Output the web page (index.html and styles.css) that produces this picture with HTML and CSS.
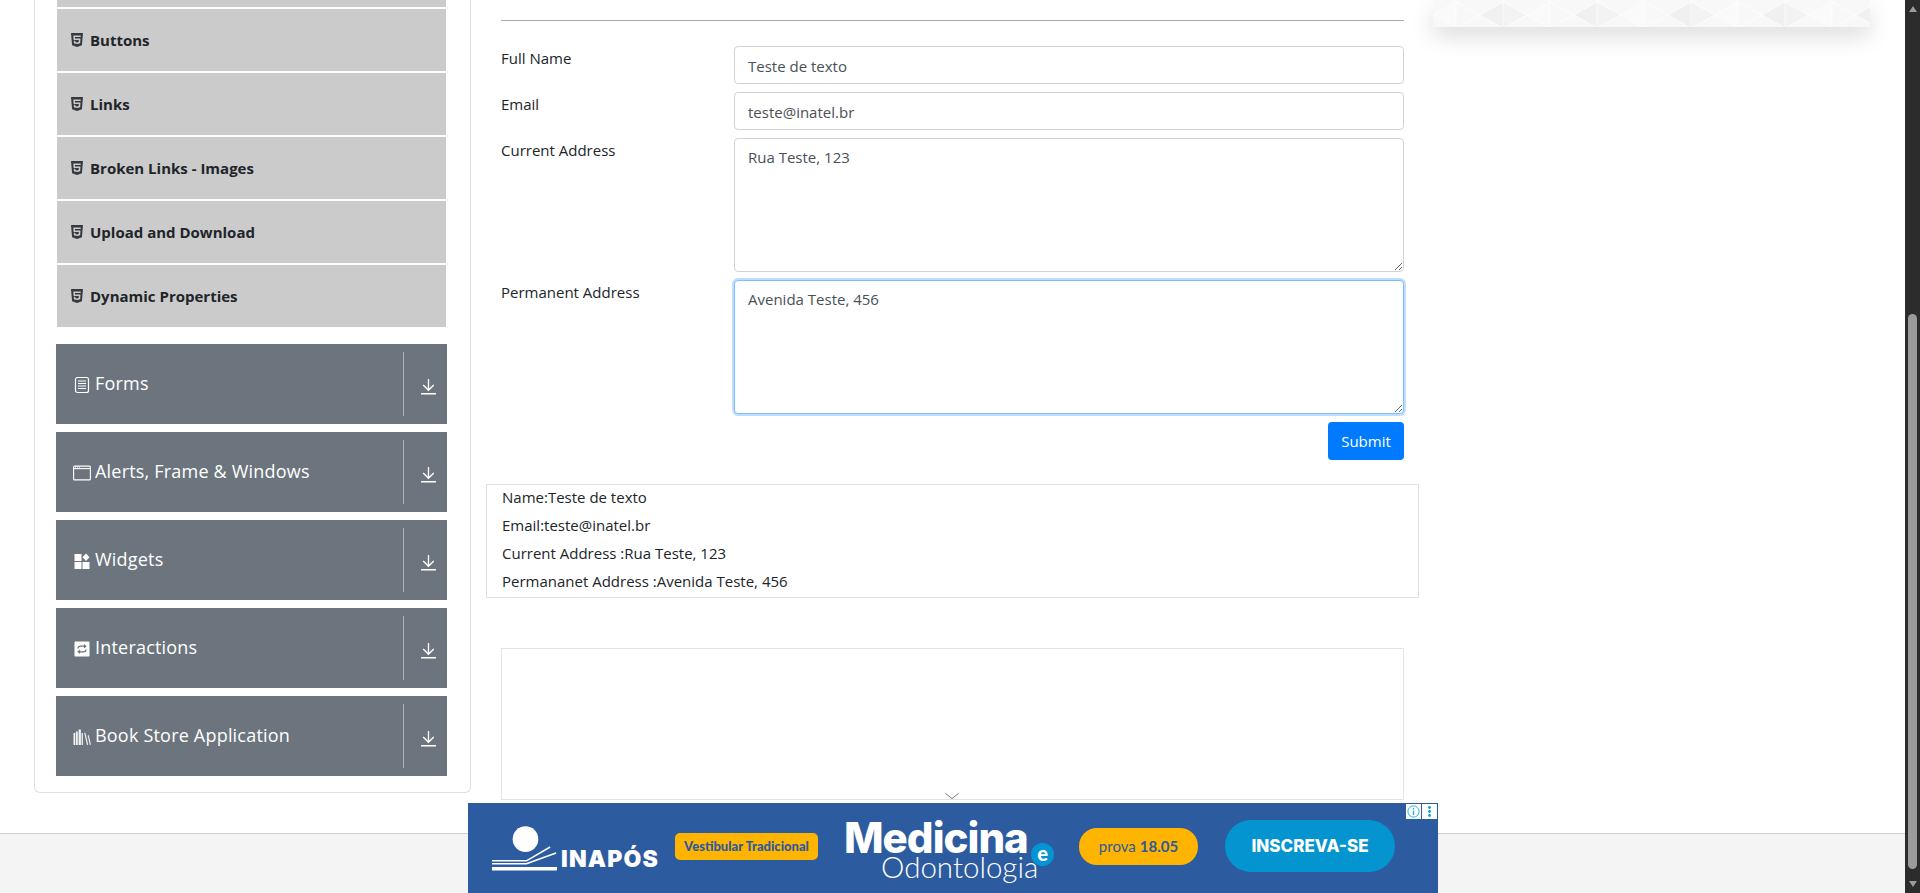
FILE: index.html
```html
<!DOCTYPE html>
<html lang="pt-BR">
<head>
  <meta charset="UTF-8">
  <title>Text Box</title>
  <link rel="stylesheet" href="styles.css">
</head>
<body>
<div class="page">
  <div class="main">
    <div class="layout">

      <!-- menu lateral -->
      <aside class="sidebar">
        <ul class="sub-list">
          <li class="sub-item stub"></li>
          <li class="sub-item"><svg class="html-icon" viewBox="0 0 384 512"><path d="M0 32l34.9 395.8L191.5 480l157.6-52.2L384 32H0zm308.2 127.9H124.4l4.1 49.4h175.6l-13.6 148.4-97.9 27v.3h-1.1l-98.7-27.3-6-75.8h47.7L138 320l53.5 14.5 53.7-14.5 6-62.2H84.3L71.5 112.2h241.1l-4.4 47.7z"/></svg>Buttons</li>
          <li class="sub-item"><svg class="html-icon" viewBox="0 0 384 512"><path d="M0 32l34.9 395.8L191.5 480l157.6-52.2L384 32H0zm308.2 127.9H124.4l4.1 49.4h175.6l-13.6 148.4-97.9 27v.3h-1.1l-98.7-27.3-6-75.8h47.7L138 320l53.5 14.5 53.7-14.5 6-62.2H84.3L71.5 112.2h241.1l-4.4 47.7z"/></svg>Links</li>
          <li class="sub-item"><svg class="html-icon" viewBox="0 0 384 512"><path d="M0 32l34.9 395.8L191.5 480l157.6-52.2L384 32H0zm308.2 127.9H124.4l4.1 49.4h175.6l-13.6 148.4-97.9 27v.3h-1.1l-98.7-27.3-6-75.8h47.7L138 320l53.5 14.5 53.7-14.5 6-62.2H84.3L71.5 112.2h241.1l-4.4 47.7z"/></svg>Broken Links - Images</li>
          <li class="sub-item"><svg class="html-icon" viewBox="0 0 384 512"><path d="M0 32l34.9 395.8L191.5 480l157.6-52.2L384 32H0zm308.2 127.9H124.4l4.1 49.4h175.6l-13.6 148.4-97.9 27v.3h-1.1l-98.7-27.3-6-75.8h47.7L138 320l53.5 14.5 53.7-14.5 6-62.2H84.3L71.5 112.2h241.1l-4.4 47.7z"/></svg>Upload and Download</li>
          <li class="sub-item"><svg class="html-icon" viewBox="0 0 384 512"><path d="M0 32l34.9 395.8L191.5 480l157.6-52.2L384 32H0zm308.2 127.9H124.4l4.1 49.4h175.6l-13.6 148.4-97.9 27v.3h-1.1l-98.7-27.3-6-75.8h47.7L138 320l53.5 14.5 53.7-14.5 6-62.2H84.3L71.5 112.2h241.1l-4.4 47.7z"/></svg>Dynamic Properties</li>
        </ul>

        <div class="group">
          <span class="group-icon">
            <svg viewBox="0 0 18 18"><rect x="2.5" y="1.5" width="13" height="15" rx="2" fill="none" stroke="#fff" stroke-width="1.2"/><path d="M5 5h8M5 7.5h8M5 10h8M5 12.5h8" stroke="#fff" stroke-width="1.1"/></svg>
          </span>
          <span class="group-name">Forms</span>
          <span class="group-arrow"><svg viewBox="0 0 16 16"><path d="M8 1v10M3 6.5l5 5 5-5M1 14.8h14" fill="none" stroke="#fff" stroke-width="1.3"/></svg></span>
        </div>
        <div class="group">
          <span class="group-icon">
            <svg viewBox="0 0 18 18"><rect x=".6" y="2.1" width="16.8" height="13.8" rx="1" fill="none" stroke="#fff" stroke-width="1.1"/><path d="M1 4.6h16" stroke="#fff" stroke-width="1.1"/><path d="M2 3h1M4 3h1M6 3h1" stroke="#fff"/></svg>
          </span>
          <span class="group-name">Alerts, Frame &amp; Windows</span>
          <span class="group-arrow"><svg viewBox="0 0 16 16"><path d="M8 1v10M3 6.5l5 5 5-5M1 14.8h14" fill="none" stroke="#fff" stroke-width="1.3"/></svg></span>
        </div>
        <div class="group">
          <span class="group-icon">
            <svg viewBox="0 0 18 18"><path d="M1.5 2h7v7h-7zM1.5 10h7v7h-7zM9.5 10h7v7h-7zM13 1.5l3.5 3.7L13 9l-3.5-3.8z" fill="#fff"/></svg>
          </span>
          <span class="group-name">Widgets</span>
          <span class="group-arrow"><svg viewBox="0 0 16 16"><path d="M8 1v10M3 6.5l5 5 5-5M1 14.8h14" fill="none" stroke="#fff" stroke-width="1.3"/></svg></span>
        </div>
        <div class="group">
          <span class="group-icon">
            <svg viewBox="0 0 18 18"><rect x="1.5" y="1.5" width="15" height="15" rx="1" fill="#fff"/><path d="M5 8.5c0-1.5 1-2.3 2.5-2.3h5M11 4.6l1.8 1.6L11 7.8M13 9.5c0 1.5-1 2.3-2.5 2.3h-5M7 10.2l-1.8 1.6L7 13.4" fill="none" stroke="#6c757d" stroke-width="1.2"/></svg>
          </span>
          <span class="group-name">Interactions</span>
          <span class="group-arrow"><svg viewBox="0 0 16 16"><path d="M8 1v10M3 6.5l5 5 5-5M1 14.8h14" fill="none" stroke="#fff" stroke-width="1.3"/></svg></span>
        </div>
        <div class="group">
          <span class="group-icon">
            <svg viewBox="0 0 18 18"><path d="M.5 5h1.6v12H.5zM2.8 3.5h2v13.5h-2zM5.6 1.5h2.3V17H5.6zM8.6 5h1.3v12H8.6zM11.2 5l1.2-.3 2.8 12-1.2.3zM14.6 7.5l1-.4 2.4 9.5-1.1.4z" fill="#fff" opacity=".9"/></svg>
          </span>
          <span class="group-name">Book Store Application</span>
          <span class="group-arrow"><svg viewBox="0 0 16 16"><path d="M8 1v10M3 6.5l5 5 5-5M1 14.8h14" fill="none" stroke="#fff" stroke-width="1.3"/></svg></span>
        </div>
      </aside>

      <!-- formulario -->
      <section class="content">
        <hr class="rule">
        <form class="user-form">
          <div class="form-row">
            <label class="form-label">Full Name</label>
            <input class="form-control" type="text" value="Teste de texto">
          </div>
          <div class="form-row">
            <label class="form-label">Email</label>
            <input class="form-control" type="text" value="teste@inatel.br">
          </div>
          <div class="form-row">
            <label class="form-label">Current Address</label>
            <textarea class="form-control area">Rua Teste, 123</textarea>
          </div>
          <div class="form-row">
            <label class="form-label">Permanent Address</label>
            <textarea class="form-control area focused">Avenida Teste, 456</textarea>
          </div>
          <div class="form-actions">
            <button class="btn-submit" type="button">Submit</button>
          </div>
        </form>

        <div class="output">
          <p>Name:Teste de texto</p>
          <p>Email:teste@inatel.br</p>
          <p>Current Address :Rua Teste, 123</p>
          <p>Permananet Address :Avenida Teste, 456</p>
        </div>

        <div class="ad-frame">
          <svg class="ad-chevron" viewBox="0 0 14 6"><path d="M.5.5L7 5.5 13.5.5" fill="none" stroke="#777" stroke-width="1"/></svg>
        </div>
      </section>

      <!-- coluna direita -->
      <aside class="right-col">
        <div class="pattern-card">
          <svg class="pattern-svg" width="437" height="27">
            <defs>
              <pattern id="tri" width="94" height="52" patternUnits="userSpaceOnUse" x="47" y="-11">
                <rect width="94" height="52" fill="#f8f8f8"/>
                <path d="M0 26L23 13V39z" fill="#f0f0f0"/>
                <path d="M23 13L46 26 23 39z" fill="#f3f3f3"/>
                <path d="M47 26L70 13V39z" fill="#fafafa"/>
                <path d="M0 26L23 13 47 26 70 13 94 26 70 39 47 26 23 39zM23 0v52M70 0v52M23 13L47 0 70 13M23 39L47 52 70 39" fill="none" stroke="#fff" stroke-width="1" stroke-opacity=".7"/>
              </pattern>
            </defs>
            <rect width="437" height="27" fill="url(#tri)"/>
          </svg>
        </div>
      </aside>
    </div>
    <footer class="footer"></footer>
  </div>

  <!-- barra de rolagem -->
  <div class="scrollbar">
    <span class="sb-up"></span>
    <span class="sb-thumb"></span>
    <span class="sb-down"></span>
  </div>

  <!-- anuncio fixo -->
  <div class="ad">
    <svg class="ad-mark" viewBox="0 0 68 46">
      <circle cx="34" cy="13" r="13" fill="#fff"/>
      <path d="M0 35h35L59 21M0 38h35L65 27" fill="none" stroke="#fff" stroke-width="1.6"/>
      <path d="M0 43h66" stroke="#fff" stroke-width="3.4"/>
    </svg>
    <span class="ad-brand">INAPÓS</span>
    <span class="ad-tag">Vestibular Tradicional</span>
    <div class="ad-title">
      <span class="ad-big">Medicina</span>
      <span class="ad-small">Odontologia</span>
      <span class="ad-e">e</span>
    </div>
    <span class="ad-date">prova <b>18.05</b></span>
    <span class="ad-cta">INSCREVA-SE</span>
    <div class="ad-choices">
      <span class="ad-choice"><svg viewBox="0 0 15 15"><circle cx="7.5" cy="7.5" r="5.6" fill="none" stroke="#1fb6d9" stroke-width="1"/><path d="M7.5 4v1.4M7.5 6.5v4.5" stroke="#1fb6d9" stroke-width="1.4"/></svg></span>
      <span class="ad-choice"><svg viewBox="0 0 15 15"><circle cx="7.5" cy="3.5" r="1.4" fill="#00a5c8"/><circle cx="7.5" cy="7.5" r="1.4" fill="#00a5c8"/><circle cx="7.5" cy="11.5" r="1.4" fill="#00a5c8"/></svg></span>
    </div>
  </div>
</div>
</body>
</html>
```

FILE: styles.css
```css
* {
  box-sizing: border-box;
}

html, body {
  margin: 0;
  height: 100%;
  overflow: hidden;
}

body {
  font-family: "Open Sans", "Noto Sans", sans-serif;
  font-size: 15px;
  color: #212529;
  background: #fff;
}

.page {
  display: flex;
  height: 893px;
  position: relative;
}

.main {
  width: 1905px;
  display: flex;
  flex-direction: column;
}

.layout {
  display: flex;
  height: 833px;
  overflow: hidden;
  padding-left: 34px;
}

/* menu lateral */
.sidebar {
  width: 437px;
  height: 793px;
  flex: none;
  border: 1.5px solid #dfdfdf;
  border-top: none;
  border-radius: 0 0 6px 6px;
  padding: 0 23px 0 21px;
}

.sub-list {
  list-style: none;
  margin: 0 1px 17px;
  padding: 0;
  display: flex;
  flex-direction: column;
  gap: 2px;
}

.sub-item {
  height: 62px;
  background: #cbcbcb;
  display: flex;
  align-items: center;
  padding-left: 14px;
  font-size: 15px;
  font-weight: 700;
  color: #212529;
}

.sub-item.stub {
  height: 7px;
}

.html-icon {
  width: 12px;
  height: 16px;
  margin-right: 7px;
  fill: #343a40;
}

.group {
  height: 80px;
  background: #6c757d;
  margin-bottom: 8px;
  display: flex;
  align-items: center;
  color: #fff;
  position: relative;
}

.group-icon {
  width: 18px;
  height: 18px;
  margin-left: 17px;
  margin-right: 4px;
  margin-top: 2px;
  flex: none;
}

.group-icon svg {
  display: block;
  width: 18px;
  height: 18px;
}

.group-name {
  font-size: 18px;
  letter-spacing: .2px;
  flex: 1;
  margin-top: -3px;
}

.group-arrow {
  height: 64px;
  width: 44px;
  flex: none;
  border-left: 1px solid #adb3b8;
  display: flex;
  align-items: center;
  justify-content: center;
}

.group-arrow svg {
  width: 17px;
  height: 17px;
  margin: 4px 0 0 6px;
}

/* formulario */
.content {
  width: 933px;
  flex: none;
  margin-left: 15px;
  padding: 0 15px;
}

.rule {
  margin: 20px 0 25px;
  border: none;
  border-top: 1px solid #a8a8a8;
}

.form-row {
  display: flex;
  margin-bottom: 8px;
}

.form-label {
  width: 233px;
  flex: none;
  padding-top: 2px;
  line-height: 20px;
}

.form-control {
  flex: 1;
  display: block;
  height: 38px;
  padding: 6px 13px;
  font-family: inherit;
  font-size: 15px;
  line-height: 24px;
  color: #495057;
  background: #fff;
  border: 1px solid #ced4da;
  border-radius: 4px;
  outline: none;
}

input.form-control {
  padding-top: 7px;
  padding-bottom: 5px;
}

.area {
  height: 134px;
}

.focused {
  border-color: #80bdff;
  box-shadow: 0 0 0 2px rgba(0, 123, 255, .25);
}

.form-actions {
  display: flex;
  justify-content: flex-end;
}

.btn-submit {
  width: 76px;
  height: 38px;
  background: #007bff;
  color: #fff;
  border: none;
  border-radius: 4px;
  font-family: inherit;
  font-size: 15px;
}

.output {
  margin: 24px -15px 0;
  height: 114px;
  border: 1px solid #dee2e6;
  padding: 0 15px;
}

.output p {
  margin: 0 0 4px;
  line-height: 24px;
}

.ad-frame {
  margin-top: 50px;
  height: 152px;
  border: 1px solid #e3e3e3;
  position: relative;
}

.ad-chevron {
  position: absolute;
  left: 443px;
  bottom: 0;
  width: 14px;
  height: 6px;
}

/* coluna direita */
.right-col {
  width: 437px;
  margin-left: 14px;
  flex: none;
}

.pattern-card {
  height: 27px;
  box-shadow: 0 10px 22px rgba(0, 0, 0, .13);
}

.pattern-svg {
  display: block;
}

.footer {
  height: 60px;
  background: #f4f4f4;
  border-top: 1px solid #cfcfcf;
}

/* barra de rolagem */
.scrollbar {
  width: 15px;
  background: #2c2c2c;
  display: flex;
  flex-direction: column;
  align-items: center;
}

.sb-up {
  width: 0;
  height: 0;
  margin-top: 6px;
  border: 4.5px solid transparent;
  border-top: none;
  border-bottom: 6px solid #9b9b9b;
}

.sb-thumb {
  width: 9px;
  height: 555px;
  margin-top: 302px;
  background: #9b9b9b;
  border-radius: 5px;
}

.sb-down {
  width: 0;
  height: 0;
  margin-top: 12px;
  border: 4.5px solid transparent;
  border-bottom: none;
  border-top: 6px solid #9b9b9b;
}

/* anuncio */
.ad {
  position: absolute;
  left: 468px;
  bottom: 0;
  width: 970px;
  height: 90px;
  background: #2d5b9f;
  display: flex;
  align-items: center;
  padding-left: 24px;
  font-family: Lato, sans-serif;
}

.ad-mark {
  width: 67px;
  height: 46px;
  flex: none;
  margin-top: 2px;
}

.ad-brand {
  font-family: Inter, sans-serif;
  font-weight: 900;
  font-size: 23px;
  color: #fff;
  margin: 22px 0 0 2px;
  letter-spacing: 1.2px;
  width: 114px;
}

.ad-tag {
  width: 143px;
  height: 27px;
  background: #ffb400;
  color: #2d5b9f;
  border-radius: 5px;
  font-size: 13px;
  font-weight: 900;
  display: flex;
  align-items: center;
  justify-content: center;
  flex: none;
  margin-top: -4px;
}

.ad-title {
  position: relative;
  width: 235px;
  margin-left: 26px;
  color: #fff;
  display: flex;
  flex-direction: column;
  margin-top: 6px;
}

.ad-big {
  font-family: Inter, sans-serif;
  font-weight: 800;
  font-size: 42px;
  line-height: 31px;
  letter-spacing: -1px;
}

.ad-small {
  font-weight: 300;
  font-size: 29.5px;
  line-height: 28px;
  margin-left: 37px;
}

.ad-e {
  position: absolute;
  left: 187px;
  top: 21px;
  width: 23px;
  height: 23px;
  border-radius: 50%;
  background: #0494d3;
  font-weight: 900;
  font-size: 20px;
  line-height: 20px;
  text-align: center;
}

.ad-date {
  width: 119px;
  height: 37px;
  border-radius: 18px;
  background: #ffb400;
  color: #2d5b9f;
  font-size: 15px;
  display: flex;
  align-items: center;
  justify-content: center;
  gap: 4px;
  flex: none;
  margin-top: -4px;
}

.ad-cta {
  width: 170px;
  height: 52px;
  border-radius: 26px;
  background: #0494d0;
  color: #fff;
  font-family: Inter, sans-serif;
  font-weight: 800;
  font-size: 17px;
  display: flex;
  align-items: center;
  justify-content: center;
  flex: none;
  margin: -4px 0 0 27px;
}

.ad-choices {
  position: absolute;
  right: 1px;
  top: 1px;
  display: flex;
  gap: 1px;
}

.ad-choice {
  width: 15px;
  height: 15px;
  background: #fff;
}

.ad-choice svg {
  display: block;
}
```
